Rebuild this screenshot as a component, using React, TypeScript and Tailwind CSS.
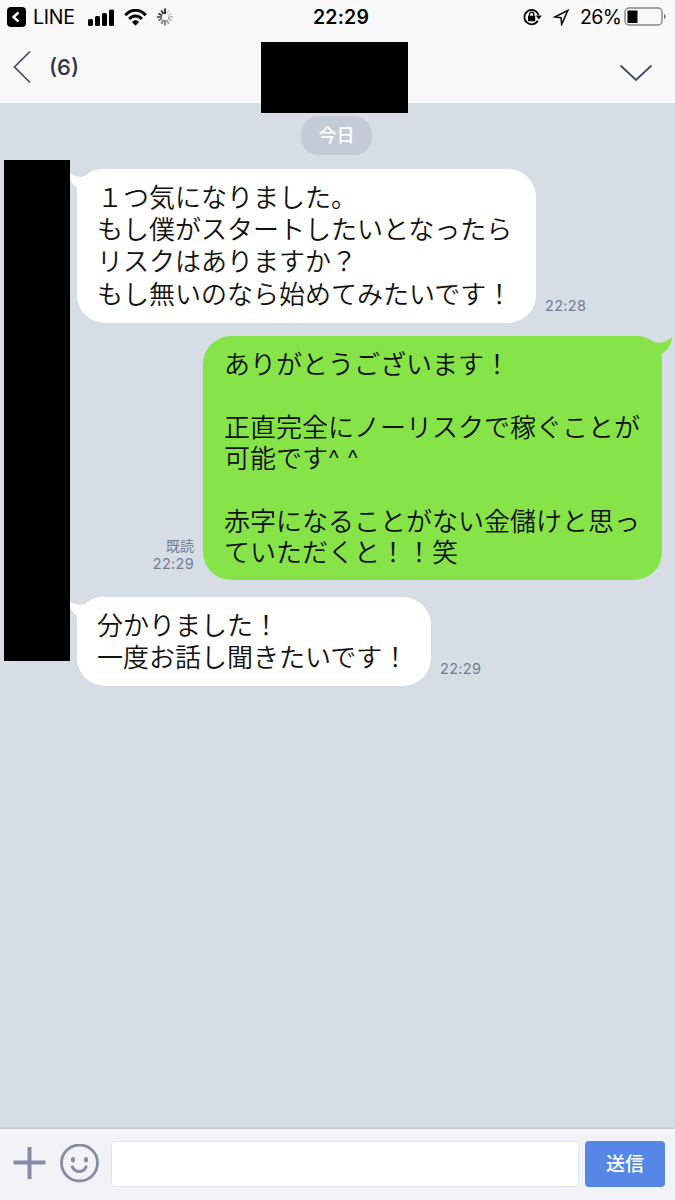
import React from "react";

const LeftTail: React.FC = () => (
  <svg className="absolute top-0 -left-[7px]" width="34" height="24" viewBox="0 0 34 24">
    <path d="M0 4.500C4 7.500 10 8.500 15 7C20 3 24 0 34 0V24H7V19C4 16.500 1 13 0 10Z" fill="#fff" />
  </svg>
);

const RightTail: React.FC = () => (
  <svg className="absolute top-0 -right-[11px]" width="42" height="32" viewBox="0 0 42 32">
    <path
      d="M0 0H6C13 0 18 3 23 6C29 8 36 6 41 1C41 8 36 15 30.500 18L31 32H0Z"
      fill="#86e449"
    />
  </svg>
);

const StatusBar: React.FC = () => {
  return (
    <div className="flex h-[34px] items-center text-black">
      <div className="flex flex-1 items-center pl-[7px]">
        <svg width="19" height="20" viewBox="0 0 19 20">
          <rect width="19" height="20" rx="4" fill="#000" />
          <path d="M11.500 5.500L6.500 10L11.500 14.500" fill="none" stroke="#fff" strokeWidth="2.400" />
        </svg>
        <span className="mt-px ml-[7px] w-[42px] text-[19.500px] leading-none tracking-[-0.2px]">LINE</span>
        <svg className="ml-[13px]" width="27" height="17" viewBox="0 0 27 17">
          <rect x="0" y="10" width="5" height="7" rx="1.500" />
          <rect x="7" y="7" width="5" height="10" rx="1.500" />
          <rect x="14" y="4" width="5" height="13" rx="1.500" />
          <rect x="21" y="0.500" width="5" height="16.500" rx="1.500" />
        </svg>
        <svg className="ml-[9px]" width="23" height="17" viewBox="0 0 23 17">
          <path d="M1.300 6.300C7-0.300 16-0.300 21.700 6.300" fill="none" stroke="#000" strokeWidth="3" />
          <path d="M5.200 10C8.700 6 14.300 6 17.800 10" fill="none" stroke="#000" strokeWidth="3" />
          <path d="M8 13C10 10.800 13 10.800 15 13L11.500 16.700Z" />
        </svg>
        <svg className="ml-[9px]" width="18" height="18" viewBox="0 0 18 18" strokeWidth="1.700">
          <path d="M9 0.500V6" stroke="#111" />
          <path d="M12.800 2.500L11 5.500" stroke="#ccc" />
          <path d="M15.500 5.500L12 7.500" stroke="#ccc" />
          <path d="M12 9H17" stroke="#bbb" />
          <path d="M12 10.500L15.500 12.500" stroke="#aaa" />
          <path d="M10.500 12L12.800 15.800" stroke="#999" />
          <path d="M9 12V17.500" stroke="#777" />
          <path d="M7.500 12L5.300 15.800" stroke="#777" />
          <path d="M6 10.500L2.500 12.500" stroke="#666" />
          <path d="M1 9H6" stroke="#555" />
          <path d="M2.500 5.500L6 7.500" stroke="#333" />
          <path d="M5.300 2.500L7.500 6" stroke="#222" />
        </svg>
      </div>
      <span className="mt-[2px] ml-[8px] text-[19.500px] leading-none font-semibold tracking-[0.2px]">22:29</span>
      <div className="flex flex-1 items-center justify-end pr-[8px]">
        <svg width="19" height="18" viewBox="0 0 19 18">
          <path d="M14.800 12.800A7.200 7.200 0 1 1 15.500 7" fill="none" stroke="#000" strokeWidth="1.700" />
          <path d="M12.800 7.500H18.800L15.800 11.500Z" />
          <rect x="5" y="7.700" width="7.200" height="5.600" rx="0.800" />
          <path d="M6.400 8V6.400A2.200 2.200 0 0 1 10.800 6.400V8" fill="none" stroke="#000" strokeWidth="1.300" />
        </svg>
        <svg className="ml-[11px]" width="17" height="17" viewBox="0 0 17 17">
          <path
            d="M14.800 1.500L1.700 8L8 8.700L8.700 15.300Z"
            fill="none"
            stroke="#111"
            strokeWidth="1.600"
          />
        </svg>
        <span className="mt-px ml-[10px] w-[39px] text-[19.500px] leading-none tracking-[-0.600px]">26%</span>
        <svg className="ml-[5px]" width="43" height="20" viewBox="0 0 43 20">
          <rect x="1" y="1" width="37" height="17" rx="4" fill="none" stroke="#858585" strokeWidth="1.400" />
          <rect x="3.500" y="3.500" width="10" height="12.500" fill="#000" />
          <path d="M40 7C42.300 7.500 42.300 11.500 40 12Z" fill="#777" />
        </svg>
      </div>
    </div>
  );
};

const Header: React.FC = () => {
  return (
    <header className="relative h-[103px] bg-[#f8f8f8]">
      <StatusBar />
      <div className="flex h-[66px] items-center justify-between pr-[22px] pl-[13px]">
        <div className="flex items-center">
          <svg width="18" height="34" viewBox="0 0 18 34">
            <path d="M17 1.500L1.500 17L17 32.500" fill="none" stroke="#424b61" strokeWidth="1.700" />
          </svg>
          <span className="ml-[18px] text-[22px] leading-none font-medium text-[#2c3048]">(6)</span>
        </div>
        <svg className="mt-[11px]" width="34" height="18" viewBox="0 0 34 18">
          <path d="M1.500 1.500L17 16L32.500 1.500" fill="none" stroke="#424b61" strokeWidth="1.800" />
        </svg>
      </div>
      {/* Hidden name */}
      <div className="absolute top-[42px] left-[261px] z-10 h-[71px] w-[147px] bg-black" />
    </header>
  );
};

type StampProps = { time: string; read?: boolean };

const Stamp: React.FC<StampProps> = ({ time, read }) => (
  <div className="text-right text-[14.500px] leading-[18px] font-normal tracking-[0.3px] text-[#727c93]">
    {read && <p className="text-[14px] tracking-normal">既読</p>}
    <p>{time}</p>
  </div>
);

const Chat: React.FC = () => {
  return (
    <main className="flex-1">
      <div className="flex h-[57px] justify-center pt-[13px]">
        <div className="ml-[-2px] flex h-[39px] w-[71px] items-center justify-center rounded-[18px] bg-[#c4cad6] text-[18px] font-medium text-white">
          今日
        </div>
      </div>
      <div className="flex">
        {/* Hidden avatars */}
        <div className="ml-1 h-[501px] w-[66px] shrink-0 bg-black" />
        <div className="flex flex-1 flex-col pt-[9px] pl-[7px] text-[26px] font-[350] text-[#111]">
          <div className="flex items-end">
            <div className="relative h-[154px] w-[459px] rounded-[28px] bg-white pt-[13px] pl-[20px] leading-[32.200px]">
              <LeftTail />
              <div className="relative whitespace-nowrap">
                <p>１つ気になりました。</p>
                <p>もし僕がスタートしたいとなったら</p>
                <p>リスクはありますか？</p>
                <p>もし無いのなら始めてみたいです！</p>
              </div>
            </div>
            <div className="mb-[8px] ml-[9px]">
              <Stamp time="22:28" />
            </div>
          </div>

          <div className="mt-[13px] flex items-end justify-end pr-[13px]">
            <div className="mr-[9px] mb-[7px]">
              <Stamp time="22:29" read />
            </div>
            <div className="relative h-[244px] w-[459px] rounded-[28px] bg-[#86e449] pt-[13px] pl-[21px] leading-[31.400px]">
              <RightTail />
              <div className="relative whitespace-nowrap">
                <p>ありがとうございます！</p>
                <br />
                <p>正直完全にノーリスクで稼ぐことが</p>
                <p>可能です^ ^</p>
                <br />
                <p>赤字になることがない金儲けと思っ</p>
                <p>ていただくと！！笑</p>
              </div>
            </div>
          </div>

          <div className="mt-[17px] flex items-end">
            <div className="relative h-[89px] w-[354px] rounded-[28px] bg-white pt-[13px] pl-[20px] leading-[32px]">
              <LeftTail />
              <div className="relative whitespace-nowrap">
                <p>分かりました！</p>
                <p>一度お話し聞きたいです！</p>
              </div>
            </div>
            <div className="mb-[8px] ml-[9px]">
              <Stamp time="22:29" />
            </div>
          </div>
        </div>
      </div>
    </main>
  );
};

const InputBar: React.FC = () => {
  return (
    <footer className="flex h-[73px] items-center border-t-2 border-[#c9ccd3] bg-[#f2f3f7] pb-[2px] pl-[13px]">
      <svg width="33" height="33" viewBox="0 0 33 33">
        <path d="M16.500 0V32M0.500 15.500H32.500" stroke="#858da6" strokeWidth="4" />
      </svg>
      <svg className="ml-[13px]" width="40" height="40" viewBox="0 0 40 40" fill="none" stroke="#858da6">
        <circle cx="20.500" cy="19" r="18" strokeWidth="2.800" />
        <path d="M14 15V16.500M27 15V16.500" strokeWidth="4" strokeLinecap="round" />
        <path d="M13.500 23C16 29 24.500 29 27 23" strokeWidth="3.200" strokeLinecap="round" />
      </svg>
      <div className="ml-[12px] h-[46px] w-[468px] rounded-[4px] border border-[#e1e4ec] bg-white" />
      <button className="ml-[6px] h-[46px] w-[80px] rounded-[4px] bg-[#5687e6] pt-[3px] text-[19px] font-medium text-white">
        送信
      </button>
    </footer>
  );
};

const App: React.FC = () => {
  return (
    <div className="flex h-[1200px] w-[675px] flex-col overflow-hidden bg-[#d7dde5] font-['Inter','Noto_Sans_CJK_JP',sans-serif]">
      <Header />
      <Chat />
      <InputBar />
    </div>
  );
};

export default App;
